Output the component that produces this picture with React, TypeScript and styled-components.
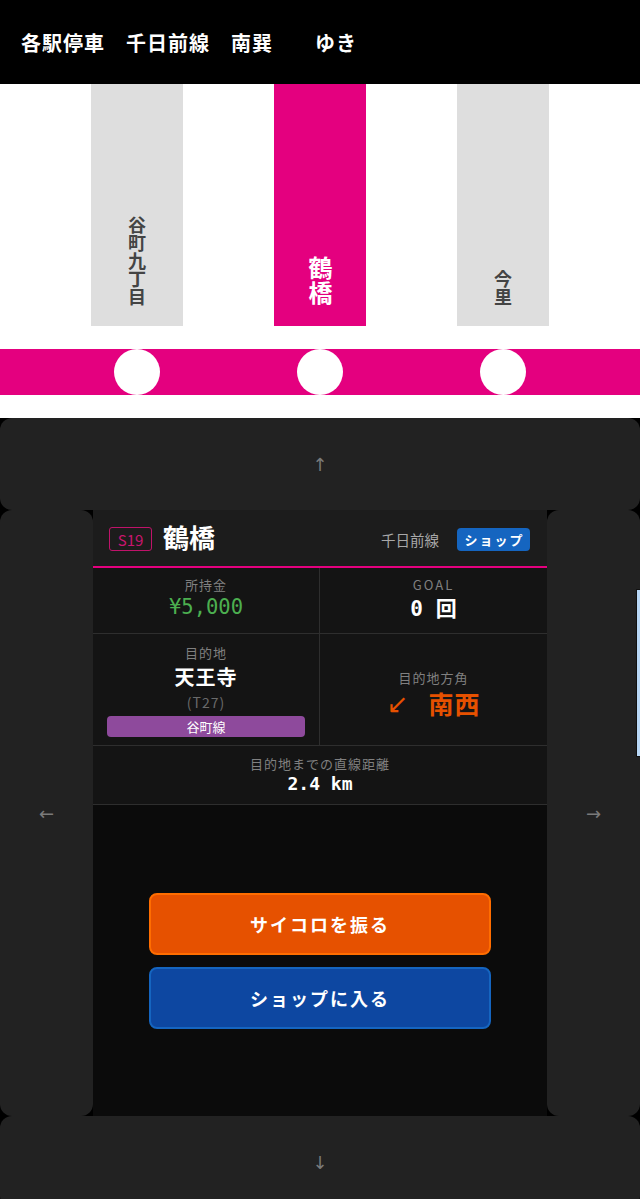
import React from "react";
import styled, { createGlobalStyle } from "styled-components";

const GlobalStyle = createGlobalStyle`
  html, body {
    margin: 0;
    padding: 0;
    background: #000;
    overflow-x: hidden;
  }
  body {
    font-family: "Noto Sans CJK JP", "Noto Sans", sans-serif;
  }
  * { box-sizing: border-box; }
`;

const CJK = `"Noto Sans CJK JP", "Noto Sans", sans-serif`;
const MONO = `"DejaVu Sans Mono", "Noto Sans Mono CJK JP", monospace`;
const PINK = "#e4007f";

const Header = styled.header`
  height: 84px;
  background: #000;
  color: #fff;
  display: flex;
  align-items: center;
  padding-left: 21px;
  font-family: ${CJK};
  font-weight: 700;
  font-size: 20px;
  letter-spacing: 1px;
  white-space: pre;
`;

const Strip = styled.section`
  background: #fff;
  height: 334px;
  display: flex;
  flex-direction: column;
`;

const StationRow = styled.div`
  display: grid;
  grid-template-columns: repeat(3, 183px);
  justify-content: center;
  height: 242px;
`;

const StationBox = styled.div<{ $current?: boolean }>`
  justify-self: center;
  width: 92px;
  height: 100%;
  background: ${(p) => (p.$current ? PINK : "#dedede")};
  display: flex;
  align-items: flex-end;
  justify-content: center;
  padding-bottom: 20px;
`;

const StationName = styled.span<{ $current?: boolean }>`
  writing-mode: vertical-rl;
  font-family: ${CJK};
  font-size: ${(p) => (p.$current ? "24px" : "18px")};
  font-weight: ${(p) => (p.$current ? 700 : 600)};
  color: ${(p) => (p.$current ? "#fff" : "#444")};
  line-height: 1;
  letter-spacing: ${(p) => (p.$current ? "1px" : "0")};
`;

const Band = styled.div`
  margin-top: 23px;
  height: 46px;
  background: ${PINK};
  display: grid;
  grid-template-columns: repeat(3, 183px);
  justify-content: center;
  align-items: center;
`;

const Dot = styled.div`
  justify-self: center;
  width: 46px;
  height: 46px;
  border-radius: 50%;
  background: #fff;
`;

const Controls = styled.section`
  position: relative;
  display: grid;
  grid-template-columns: 93px 1fr 93px;
  grid-template-rows: 92px 606px 92px;
  background: #000;
`;

const Pad = styled.div<{ $wide?: boolean }>`
  grid-column: ${(p) => (p.$wide ? "1 / -1" : "auto")};
  background: #222;
  border-radius: 12px;
  display: flex;
  align-items: center;
  justify-content: center;
  color: #7a7a7a;
  font-family: "DejaVu Sans", sans-serif;
  font-size: 18px;
`;

const EdgeTab = styled.div`
  position: absolute;
  right: 0;
  top: 171px;
  width: 4px;
  height: 168px;
  background: #b9d8f7;
  border-left: 1px solid #111;
  border-top: 1px solid #111;
  border-bottom: 1px solid #111;
`;

const Card = styled.div`
  background: #0b0b0b;
  display: flex;
  flex-direction: column;
`;

const CardHeader = styled.div`
  height: 58px;
  background: #1c1c1c;
  border-bottom: 2px solid ${PINK};
  display: flex;
  align-items: center;
  padding: 2px 17px 0 16px;
  gap: 11px;
`;

const Code = styled.span`
  display: inline-flex;
  align-items: center;
  justify-content: center;
  width: 43px;
  height: 24px;
  border: 1.5px solid #c0136a;
  border-radius: 3px;
  color: #c8166f;
  font-family: ${CJK};
  font-size: 15px;
  line-height: 1;
`;

const Title = styled.h1`
  margin: 0 0 4px;
  font-family: ${CJK};
  font-size: 26px;
  font-weight: 700;
  color: #fff;
  line-height: 1;
  flex: 1;
`;

const LineName = styled.span`
  font-family: ${CJK};
  font-size: 14.5px;
  color: #a8a8a8;
  margin-right: 7px;
`;

const ShopTag = styled.span`
  display: inline-flex;
  align-items: center;
  justify-content: center;
  width: 73px;
  height: 23px;
  background: #1565c0;
  border-radius: 4px;
  color: #fff;
  font-family: ${CJK};
  font-size: 13px;
  font-weight: 700;
  letter-spacing: 2px;
  padding-left: 2px;
`;

const Stats = styled.div`
  display: grid;
  grid-template-columns: 1fr 1fr;
  background: #141414;
`;

const Cell = styled.div<{ $span?: boolean; $center?: boolean }>`
  grid-column: ${(p) => (p.$span ? "1 / -1" : "auto")};
  display: flex;
  flex-direction: column;
  align-items: center;
  justify-content: ${(p) => (p.$center ? "center" : "flex-start")};
  border-bottom: 1px solid #2e2e2e;
  &:nth-child(odd):not(:last-child) {
    border-right: 1px solid #2e2e2e;
  }
`;

const MoneyCell = styled(Cell)`
  height: 66px;
  padding-top: 8px;
`;

const DestCell = styled(Cell)`
  height: 112px;
  padding: 10px 14px 0;
`;

const DistCell = styled(Cell)`
  height: 59px;
  padding-top: 9px;
`;

const Label = styled.span<{ $wide?: boolean }>`
  font-family: ${CJK};
  font-size: 13px;
  line-height: 18px;
  color: #808080;
  letter-spacing: ${(p) => (p.$wide ? "2px" : "1px")};
`;

const Money = styled.span`
  font-family: ${MONO};
  font-size: 20.5px;
  line-height: 26px;
  color: #4caf50;
`;

const Goal = styled.span`
  font-family: ${MONO};
  font-size: 21px;
  font-weight: 700;
  line-height: 30px;
  color: #fff;
`;

const DestName = styled.span`
  font-family: ${CJK};
  font-size: 20px;
  font-weight: 700;
  line-height: 30px;
  color: #fff;
  letter-spacing: 1px;
`;

const DestCode = styled.span`
  font-family: ${CJK};
  font-size: 14px;
  line-height: 20px;
  color: #6a6a6a;
  letter-spacing: 1px;
`;

const LineBar = styled.div<{ $color: string }>`
  margin-top: 4px;
  align-self: stretch;
  height: 21px;
  border-radius: 4px;
  background: ${(p) => p.$color};
  display: flex;
  align-items: center;
  justify-content: center;
  color: #fff;
  font-family: ${CJK};
  font-size: 13px;
`;

const Direction = styled.div`
  display: flex;
  align-items: center;
  gap: 20px;
  height: 34px;
  color: #e65100;
`;

const DirArrow = styled.span`
  font-family: "DejaVu Sans", sans-serif;
  font-size: 26px;
  font-weight: 400;
  line-height: 1;
`;

const DirText = styled.span`
  font-family: ${CJK};
  font-size: 25px;
  font-weight: 700;
  letter-spacing: 1px;
  line-height: 1;
`;

const Distance = styled.span`
  font-family: ${MONO};
  font-size: 18px;
  font-weight: 700;
  line-height: 22px;
  color: #fff;
`;

const Actions = styled.div`
  flex: 1;
  display: flex;
  flex-direction: column;
  align-items: center;
  justify-content: center;
  gap: 12px;
`;

const ActionButton = styled.button<{ $bg: string; $border: string }>`
  width: 342px;
  height: 62px;
  border-radius: 8px;
  background: ${(p) => p.$bg};
  border: 2px solid ${(p) => p.$border};
  color: #fff;
  font-family: ${CJK};
  font-size: 18px;
  font-weight: 700;
  letter-spacing: 2px;
  cursor: pointer;
`;

const stations = [
  { name: "谷町九丁目", current: false },
  { name: "鶴橋", current: true },
  { name: "今里", current: false },
];

export default function App() {
  return (
    <>
      <GlobalStyle />
      <Header>{"各駅停車　千日前線　南巽　　ゆき"}</Header>
      <Strip>
        <StationRow>
          {stations.map((s) => (
            <StationBox key={s.name} $current={s.current}>
              <StationName $current={s.current}>{s.name}</StationName>
            </StationBox>
          ))}
        </StationRow>
        <Band>
          {stations.map((s) => (
            <Dot key={s.name} />
          ))}
        </Band>
      </Strip>
      <Controls>
        <Pad $wide>↑</Pad>
        <Pad>←</Pad>
        <Card>
          <CardHeader>
            <Code>S19</Code>
            <Title>鶴橋</Title>
            <LineName>千日前線</LineName>
            <ShopTag>ショップ</ShopTag>
          </CardHeader>
          <Stats>
            <MoneyCell>
              <Label>所持金</Label>
              <Money>¥5,000</Money>
            </MoneyCell>
            <MoneyCell>
              <Label $wide>GOAL</Label>
              <Goal>0 回</Goal>
            </MoneyCell>
            <DestCell>
              <Label>目的地</Label>
              <DestName>天王寺</DestName>
              <DestCode>(T27)</DestCode>
              <LineBar $color="#8e4a9c">谷町線</LineBar>
            </DestCell>
            <DestCell $center>
              <Label>目的地方角</Label>
              <Direction>
                <DirArrow>↙</DirArrow>
                <DirText>南西</DirText>
              </Direction>
            </DestCell>
            <DistCell $span>
              <Label>目的地までの直線距離</Label>
              <Distance>2.4 km</Distance>
            </DistCell>
          </Stats>
          <Actions>
            <ActionButton $bg="#e65100" $border="#ff6d00">
              サイコロを振る
            </ActionButton>
            <ActionButton $bg="#0d47a1" $border="#1565c0">
              ショップに入る
            </ActionButton>
          </Actions>
        </Card>
        <Pad>→</Pad>
        <Pad $wide>↓</Pad>
        <EdgeTab />
      </Controls>
    </>
  );
}
